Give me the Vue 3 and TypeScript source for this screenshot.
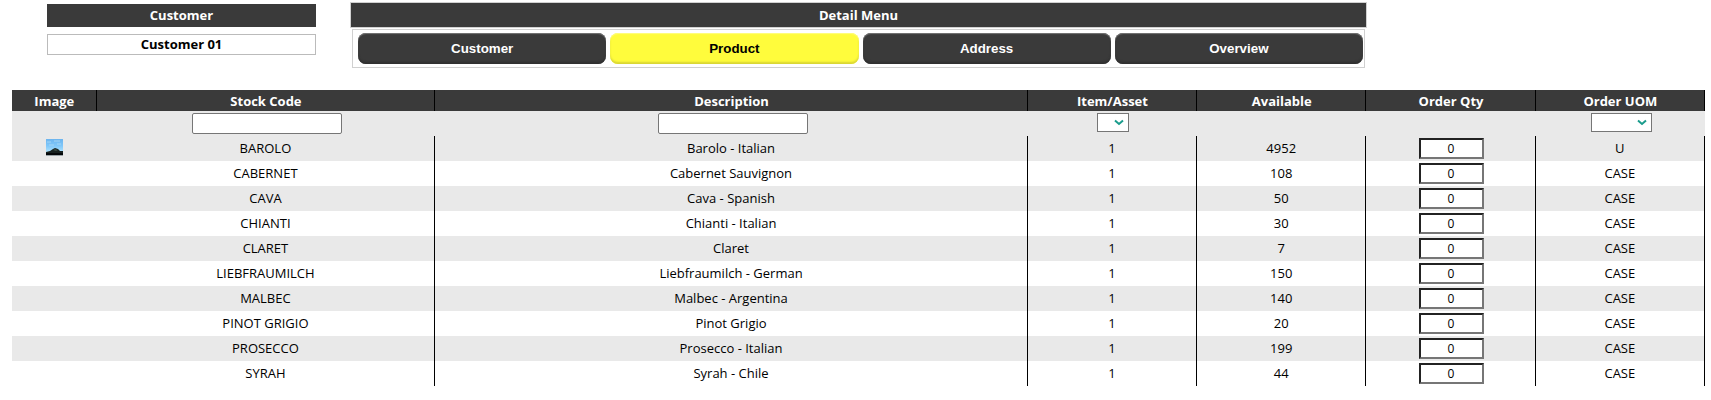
<script setup lang="ts">
import { computed, reactive, ref } from 'vue'

interface Product {
  code: string
  description: string
  item: string
  available: number
  qty: string
  uom: string
  image?: boolean
}

const tabs: string[] = ['Customer', 'Product', 'Address', 'Overview']
const activeTab = ref('Product')

const columns: { label: string; cls: string }[] = [
  { label: 'Image', cls: 'col-image' },
  { label: 'Stock Code', cls: 'col-code' },
  { label: 'Description', cls: 'col-description' },
  { label: 'Item/Asset', cls: 'col-small' },
  { label: 'Available', cls: 'col-small' },
  { label: 'Order Qty', cls: 'col-small' },
  { label: 'Order UOM', cls: 'col-small' },
]

const products = reactive<Product[]>([
  { code: 'BAROLO', description: 'Barolo - Italian', item: '1', available: 4952, qty: '0', uom: 'U', image: true },
  { code: 'CABERNET', description: 'Cabernet Sauvignon', item: '1', available: 108, qty: '0', uom: 'CASE' },
  { code: 'CAVA', description: 'Cava - Spanish', item: '1', available: 50, qty: '0', uom: 'CASE' },
  { code: 'CHIANTI', description: 'Chianti - Italian', item: '1', available: 30, qty: '0', uom: 'CASE' },
  { code: 'CLARET', description: 'Claret', item: '1', available: 7, qty: '0', uom: 'CASE' },
  { code: 'LIEBFRAUMILCH', description: 'Liebfraumilch - German', item: '1', available: 150, qty: '0', uom: 'CASE' },
  { code: 'MALBEC', description: 'Malbec - Argentina', item: '1', available: 140, qty: '0', uom: 'CASE' },
  { code: 'PINOT GRIGIO', description: 'Pinot Grigio', item: '1', available: 20, qty: '0', uom: 'CASE' },
  { code: 'PROSECCO', description: 'Prosecco - Italian', item: '1', available: 199, qty: '0', uom: 'CASE' },
  { code: 'SYRAH', description: 'Syrah - Chile', item: '1', available: 44, qty: '0', uom: 'CASE' },
])

const filters = reactive({ code: '', description: '', item: '', uom: '' })

const visible = computed(() =>
  products.filter(
    (p) =>
      p.code.toLowerCase().includes(filters.code.toLowerCase()) &&
      p.description.toLowerCase().includes(filters.description.toLowerCase()) &&
      (!filters.item || p.item === filters.item) &&
      (!filters.uom || p.uom === filters.uom),
  ),
)
</script>

<template>
  <div class="page">
    <header class="top">
      <section class="customer">
        <h2 class="bar">Customer</h2>
        <div class="customer-name">Customer 01</div>
      </section>
      <section class="detail">
        <h2 class="bar detail-title">Detail Menu</h2>
        <nav class="tabs">
          <button
            v-for="tab in tabs"
            :key="tab"
            type="button"
            class="tab"
            :class="{ active: tab === activeTab }"
            @click="activeTab = tab"
          >
            {{ tab }}
          </button>
        </nav>
      </section>
    </header>

    <table class="grid">
      <thead>
        <tr class="head">
          <th v-for="col in columns" :key="col.label" :class="col.cls" scope="col">{{ col.label }}</th>
        </tr>
        <tr class="filters">
          <td></td>
          <td><input v-model="filters.code" class="filter-text" type="text" aria-label="Stock Code" /></td>
          <td><input v-model="filters.description" class="filter-text" type="text" aria-label="Description" /></td>
          <td>
            <span class="picker">
              <select v-model="filters.item" class="select-small" aria-label="Item/Asset">
                <option value=""></option>
                <option value="1">1</option>
              </select>
              <svg class="chevron" viewBox="0 0 10 7" aria-hidden="true"><path d="M1 1.5 5 5 9 1.5" /></svg>
            </span>
          </td>
          <td></td>
          <td></td>
          <td>
            <span class="picker">
              <select v-model="filters.uom" class="select-wide" aria-label="Order UOM">
                <option value=""></option>
                <option value="U">U</option>
                <option value="CASE">CASE</option>
              </select>
              <svg class="chevron" viewBox="0 0 10 7" aria-hidden="true"><path d="M1 1.5 5 5 9 1.5" /></svg>
            </span>
          </td>
        </tr>
      </thead>
      <tbody>
        <tr v-for="p in visible" :key="p.code">
          <td class="image-cell">
            <svg v-if="p.image" class="thumb" viewBox="0 0 17 17" role="img" aria-label="Barolo">
              <defs>
                <linearGradient id="sky" x1="0" y1="0" x2="0" y2="1">
                  <stop offset="0" stop-color="#6cb4ee" />
                  <stop offset="0.4" stop-color="#80c8fa" />
                  <stop offset="0.8" stop-color="#b4e4fc" />
                </linearGradient>
              </defs>
              <rect width="17" height="17" fill="url(#sky)" />
              <path d="M1 3h4M8 2h6M3 6h5M11 5h4" stroke="#a5d5f5" stroke-width="1" />
              <path d="M0 13 4 12 7 10 9 9 12 10 14 12 17 12V16H0Z" fill="#17201f" />
              <path d="M7 11 9 10 12 11 10 12Z" fill="#3d4c43" />
              <path d="M0 14h17v2H0Z" fill="#05080a" />
              <path d="M0 16h17v1H0Z" fill="#9aa3a7" />
            </svg>
          </td>
          <td>{{ p.code }}</td>
          <td>{{ p.description }}</td>
          <td>{{ p.item }}</td>
          <td>{{ p.available }}</td>
          <td class="qty-cell">
            <input v-model="p.qty" class="qty" type="text" :aria-label="`Order Qty ${p.code}`" />
          </td>
          <td>{{ p.uom }}</td>
        </tr>
      </tbody>
    </table>
  </div>
</template>

<style>
body {
  margin: 0;
  background: #fff;
}
</style>

<style scoped>
.page {
  padding: 2px 6px 14px 12px;
  font-family: "Segoe UI", "Open Sans", "Noto Sans", sans-serif;
  font-size: 13px;
  color: #000;
}

.page * {
  box-sizing: border-box;
}

.top {
  display: grid;
  grid-template-columns: 269fr 1017fr 304fr;
  column-gap: 34px;
  align-items: start;
  padding-left: 35px;
  margin-bottom: 22px;
}

.bar {
  margin: 0;
  background: #3a3a3a;
  color: #fff;
  font-size: 13px;
  line-height: 23px;
  font-weight: 700;
  text-align: center;
}

.customer {
  display: grid;
  gap: 7px;
  padding-top: 2px;
}

.customer-name {
  border: 1px solid #bbb;
  font-weight: 700;
  line-height: 19px;
  text-align: center;
}

.detail-title {
  border: 1px solid #d0d0d0;
  line-height: 24px;
}

.tabs {
  display: grid;
  grid-template-columns: repeat(4, 1fr);
  gap: 4px;
  margin: 1px 2px 0;
  padding: 3px 1px 3px 5px;
  border: 1px solid #d0d0d0;
}

.tab {
  height: 31px;
  padding: 0;
  border: 0;
  border-radius: 8px;
  background: #3a3a3a;
  box-shadow: inset 0 1px 1px #777, inset 0 -2px 2px #303030;
  color: #fff;
  font-family: "Liberation Sans", Arial, sans-serif;
  font-weight: 700;
  cursor: pointer;
}

.tab.active {
  background: #fffc3c;
  box-shadow: inset 0 1px 1px #fffd80, inset 0 -2px 2px #d8d534;
  color: #000;
}

.grid {
  width: 100%;
  table-layout: fixed;
  border-collapse: separate;
  border-spacing: 0;
  text-align: center;
}

.col-image { width: 5%; }
.col-code { width: 20%; }
.col-description { width: 35%; }
.col-small { width: 10%; }

th {
  height: 21px;
  padding: 0 0 0 1px;
  border-right: 1px solid #000;
  background: #3a3a3a;
  color: #fff;
  line-height: 20px;
  font-weight: 700;
}

td {
  height: 25px;
  padding: 0 0 2px;
  line-height: 16px;
  vertical-align: middle;
}

.filters td {
  padding: 2px 0 0 2px;
  background: #e9e9e9;
  vertical-align: top;
}

tbody td {
  border-right: 1px solid #000;
}

tbody td.image-cell {
  padding-left: 1px;
  border-right-color: transparent;
}

tbody td.qty-cell {
  padding: 0 0 0 1px;
}

tbody tr:nth-child(odd) td {
  background: #e9e9e9;
}

.filter-text {
  display: block;
  width: 150px;
  height: 21px;
  margin: 0 auto;
  padding: 1px 2px;
  border: 1px solid #767676;
  border-radius: 2px;
  background: #fff;
  font: inherit;
}

.picker {
  display: block;
  position: relative;
  width: fit-content;
  margin: 0 auto;
}

select {
  display: block;
  height: 19px;
  margin: 0;
  padding: 0 16px 0 2px;
  border: 1px solid #767676;
  border-radius: 0;
  background: #fff;
  appearance: none;
  font: inherit;
}

.select-small { width: 32px; }
.select-wide { width: 61px; }

.chevron {
  position: absolute;
  top: 6px;
  right: 5px;
  width: 10px;
  height: 7px;
  fill: none;
  stroke: #1a9c8c;
  stroke-width: 2;
  pointer-events: none;
}

.qty {
  display: block;
  width: 65px;
  height: 21px;
  margin: 0 auto;
  padding: 0;
  border: 2px solid;
  border-color: #222 #767676 #767676 #222;
  background: #fff;
  font: inherit;
  font-size: 12px;
  text-align: center;
}

.thumb {
  display: block;
  width: 17px;
  height: 17px;
  margin: 0 auto;
}
</style>
